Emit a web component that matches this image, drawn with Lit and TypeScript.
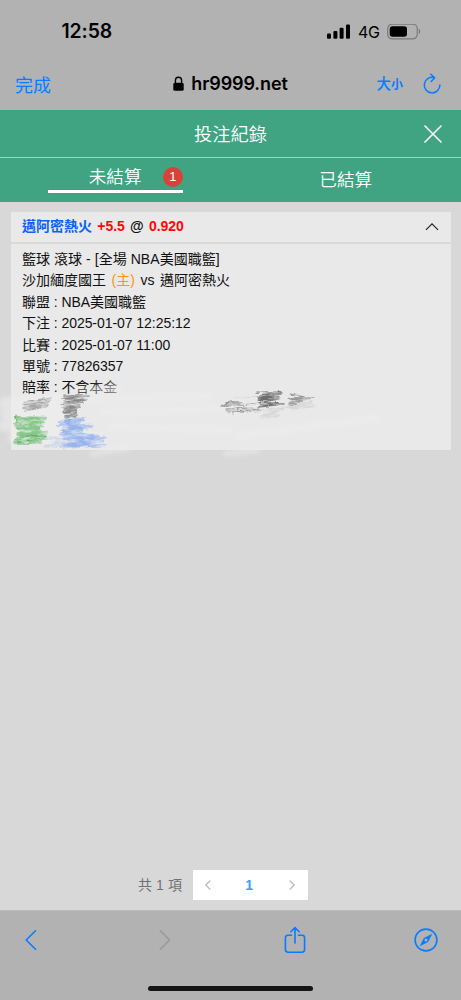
import { LitElement, html, css, svg } from "lit";
import { customElement } from "lit/decorators.js";

@customElement("status-bar")
class StatusBar extends LitElement {
  static styles = css`
    :host { display: flex; height: 62px; justify-content: space-between; box-sizing: border-box; padding: 20px 40px 0 61.5px; }
    .time { font: 600 19.4px/23px Inter, sans-serif; letter-spacing: -0.1px; color: #000; }
    .right { display: flex; height: 23px; align-items: center; }
    .net { font: 400 16px/23px Inter, sans-serif; margin: 1px 7px 0 8px; letter-spacing: -0.3px; width: 22px; }
    svg { display: block; }
  `;
  render() {
    return html`
      <div class="time">12:58</div>
      <div class="right">
        <svg width="24" height="16" viewBox="0 0 24 16">
          <rect x="1" y="9.6" width="4" height="5.2" rx="1.1" /><rect x="7.4" y="7" width="4" height="7.8" rx="1.1" />
          <rect x="13.6" y="3.8" width="4" height="11" rx="1.1" /><rect x="20" y="0.5" width="4" height="14.3" rx="1.1" />
        </svg>
        <span class="net">4G</span>
        <svg width="34" height="16" viewBox="0 0 34 16">
          <rect x="0.7" y="0.2" width="29.6" height="14.6" rx="4.6" fill="none" stroke="#7b7b7b" stroke-width="1.2" />
          <rect x="2.7" y="2.2" width="17.3" height="10.6" rx="2.8" />
          <path d="M31.8 4.8c1.9.7 1.9 4.7 0 5.4z" fill="#7b7b7b" />
        </svg>
      </div>`;
  }
}

@customElement("address-bar")
class AddressBar extends LitElement {
  static styles = css`
    :host { display: grid; grid-template-columns: 1fr auto 1fr; align-items: center; height: 48px; box-sizing: border-box; padding: 0 19px 4px 15px; }
    .blue { color: #087cff; font: 400 18px/26px "Noto Sans CJK TC", sans-serif; margin-top: -1px; }
    .site { display: flex; align-items: center; gap: 7px; font: 600 18px/24px Inter, sans-serif; letter-spacing: -0.1px; color: #000; padding-left: 4px; }
    .tools { display: flex; justify-content: flex-end; align-items: center; gap: 19px; }
    .size { display: flex; align-items: baseline; font-weight: 500; font-size: 14.5px; }
    .size small { font-size: 12px; font-weight: 700; }
    svg { display: block; }
  `;
  render() {
    return html`
      <span class="blue">完成</span>
      <span class="site">
        <svg width="11" height="16" viewBox="0 0 11 16"><rect x="0.3" y="6.8" width="10.4" height="8" rx="1.6" /><path d="M2.4 7.5V4.4a3.1 3.1 0 0 1 6.2 0v3.1" fill="none" stroke="#000" stroke-width="1.4" /></svg>
        <span>hr9999.net</span>
      </span>
      <span class="tools">
        <span class="blue size">大<small>小</small></span>
        <svg width="20" height="22" viewBox="0 0 20 22" fill="none" stroke="#087cff" stroke-width="1.5" stroke-linecap="round" stroke-linejoin="round"><path d="M12.3 4.6A7.8 7.8 0 1 0 17.9 12.1M8.8 1.2l3.9 3.5-3.5 3.8" /></svg>
      </span>`;
  }
}

@customElement("record-header")
class RecordHeader extends LitElement {
  static styles = css`
    :host { display: block; background: #40a381; color: #fff; font-family: "Noto Sans CJK TC", sans-serif; }
    .title { display: grid; grid-template-columns: 50px 1fr 50px; height: 48px; box-sizing: border-box; border-bottom: 1px solid #a8cfc0; text-align: center; font-size: 18.3px; line-height: 47px; font-weight: 350; }
    .title span { grid-column: 2; }
    .title svg { display: block; margin: 14.5px 0 0 13px; }
    .tabs { display: grid; grid-template-columns: 1fr 1fr; height: 44px; font-size: 17.6px; font-weight: 350; }
    .tab { display: flex; justify-content: center; line-height: 42px; }
    .active { width: 135px; height: 35px; box-sizing: border-box; border-bottom: 3px solid #fff; padding-left: 41px; display: flex; line-height: 35px; }
    .badge { width: 20px; height: 20px; border-radius: 50%; background: #db413b; font: 400 13px/20px "Liberation Sans", sans-serif; text-align: center; margin: 9px 0 0 auto; }
    .word { white-space: nowrap; }
  `;
  render() {
    return html`
      <div class="title"><span>投注紀錄</span>
        <svg width="18" height="18" viewBox="0 0 18 18" stroke="#fff" stroke-width="1.6" stroke-linecap="round"><path d="M1 1L17 17M17 1L1 17" /></svg>
      </div>
      <div class="tabs">
        <div class="tab"><div class="active"><span class="word">未結算</span><span class="badge">1</span></div></div>
        <div class="tab"><span class="word">已結算</span></div>
      </div>`;
  }
}

interface Scribble { color: string; width: number; opacity: number; d: string; }

const hazes: Scribble[] = [
  { color: "#efefef", width: 12, opacity: 0.5, d: "M4 403L60 399L6 414L70 409L4 426L60 422L14 438L100 438" },
  { color: "#ececec", width: 5, opacity: 0.6, d: "M92 454L128 448M226 454L258 450" },
  { color: "#eeeeee", width: 8, opacity: 0.4, d: "M76 390L118 388M90 399L210 396M105 412L235 409M110 426L230 430M240 436L375 418" },
];

const scribbles: Scribble[] = [
  { color: "#777", width: 1.5, opacity: 0.55, d: "M24 402L51 398M24 405L50 401L23 408L48 405L24 411L40 408" },
  { color: "#999", width: 4, opacity: 0.3, d: "M26 403L49 400L25 408L44 406" },
  { color: "#3c3c3c", width: 1.7, opacity: 0.5, d: "M64 396L89 396L62 399L86 399L63 402L83 402L61 405L79 405L62 408L80 407L64 410L77 410L64 413L76 413L66 417L77 415L69 420L75 418" },
  { color: "#777", width: 5, opacity: 0.4, d: "M66 398L80 399L65 405L77 406L67 412L75 412" },
  { color: "#65b867", width: 2.4, opacity: 0.5, d: "M16 417L46 418L17 421L44 422L15 425L43 426L18 429L39 429L18 433L47 432L17 437L46 436L15 441L44 439L16 444L35 442" },
  { color: "#66bd6a", width: 7, opacity: 0.5, d: "M20 420L38 421L20 427L37 429L20 434L43 435L20 441L39 440" },
  { color: "#3b9b46", width: 1.5, opacity: 0.5, d: "M16 415L17 423M16 439L46 436M23 435L47 439M14 443L31 441" },
  { color: "#779ff0", width: 2.5, opacity: 0.5, d: "M59 422L84 419L58 426L90 425L62 430L92 427L60 434L98 436L63 439L105 437L63 443L103 441L61 447L105 445M64 448L85 446M80 446L106 437" },
  { color: "#769df0", width: 7, opacity: 0.45, d: "M67 421L78 421L65 429L80 430L66 437L92 437L67 444L87 444" },
  { color: "#a9bfeb", width: 4, opacity: 0.4, d: "M50 438L67 439L46 447L69 443" },
  { color: "#444", width: 1.1, opacity: 0.6, d: "M221 406L229 402L242 402M222 406L244 405M227 409L247 408M225 404L240 404M233 402V414M238 411L260 410M246 404L254 404" },
  { color: "#999", width: 4, opacity: 0.35, d: "M226 405L242 404M230 411L252 409" },
  { color: "#888", width: 1, opacity: 0.35, d: "M235 398L259 397M227 411L260 411M228 413L255 409M248 405L264 403" },
  { color: "#333", width: 1.4, opacity: 0.6, d: "M257 392L282 392L260 395L281 394L258 398L279 397L258 400L278 399L259 403L284 404L260 404L278 403L259 407L276 405" },
  { color: "#555", width: 4, opacity: 0.4, d: "M260 398L278 398M260 404L277 404" },
  { color: "#555", width: 1.3, opacity: 0.55, d: "M290 394L304 397L289 398L314 398L290 400L307 399L289 403L302 401L290 405L300 402" },
  { color: "#bbb", width: 3, opacity: 0.35, d: "M288 407L312 402L292 408L313 406M258 411L284 408L262 417L278 415" },
];

const stroke = (s: Scribble) => svg`<path d=${s.d} stroke=${s.color} stroke-width=${s.width} opacity=${s.opacity} />`;

@customElement("bet-card")
class BetCard extends LitElement {
  static styles = css`
    :host { display: block; position: relative; margin: 10px 10.5px 0 10.5px; background: #e9e9e9; height: 237.5px; font: 14px/21.4px "Liberation Sans", "Noto Sans CJK TC", sans-serif; color: #111; }
    .head { display: flex; height: 32px; box-sizing: border-box; border-bottom: 2px solid #d9d9d9; padding: 0 12px 0 11.5px; align-items: center; justify-content: space-between; font-weight: 700; }
    .name { word-spacing: 1.3px; }
    .team { color: #0b63f3; }
    .odd { color: #fc0808; }
    .body { padding: 5px 11.5px; white-space: pre; font-weight: 400; }
    .row { height: 21.4px; letter-spacing: -0.05px; }
    .first { letter-spacing: 0.05px; }
    .match { letter-spacing: 0; word-spacing: 1.7px; }
    .home { color: #ff9317; }
    .marks { position: absolute; left: -10.5px; top: 173px; pointer-events: none; }
    .fade { position: absolute; left: 78px; top: 168px; width: 30px; height: 18px; background: linear-gradient(to right, #e9e9e900, #e9e9e970); }
  `;
  render() {
    const rows = ["聯盟 : NBA美國職籃", "下注 : 2025-01-07 12:25:12", "比賽 : 2025-01-07 11:00", "單號 : 77826357", "賠率 : 不含本金"];
    return html`
      <div class="head">
        <span class="name"><span class="team">邁阿密熱火</span> <span class="odd">+5.5</span> @ <span class="odd">0.920</span></span>
        <svg width="14" height="10" viewBox="0 0 14 10" fill="none" stroke="#222" stroke-width="1.2"><path d="M1 7.8L7 1.8L13 7.8" /></svg>
      </div>
      <div class="body"><div class="row first">籃球 滾球 - [全場 NBA美國職籃]</div><div class="row match">沙加緬度國王 <span class="home">(主)</span> vs 邁阿密熱火</div>${rows.map((r) => html`<div class="row">${r}</div>`)}</div>
      <div class="fade"></div>
      <svg class="marks" width="461" height="75" viewBox="0 385 461 75">
        <defs>
          <filter id="haze" filterUnits="userSpaceOnUse" x="0" y="385" width="461" height="75">
            <feGaussianBlur stdDeviation="2" />
          </filter>
          <filter id="rough" filterUnits="userSpaceOnUse" x="0" y="385" width="461" height="75" color-interpolation-filters="sRGB">
            <feTurbulence type="fractalNoise" baseFrequency="0.1 0.3" numOctaves="3" seed="4" result="n" />
            <feDisplacementMap in="SourceGraphic" in2="n" scale="4" xChannelSelector="R" yChannelSelector="G" result="s" />
            <feColorMatrix in="n" type="matrix" values="0 0 0 0 0  0 0 0 0 0  0 0 0 0 0  2 0 0 0 -0.15" result="m" />
            <feComposite in="s" in2="m" operator="in" />
            <feGaussianBlur stdDeviation="0.5 0.35" />
          </filter>
        </defs>
        <g fill="none" stroke-linecap="round" stroke-linejoin="round" filter="url(#haze)">${hazes.map(stroke)}</g>
        <g fill="none" stroke-linecap="round" stroke-linejoin="round" filter="url(#rough)">${scribbles.map(stroke)}</g>
      </svg>`;
  }
}

@customElement("page-nav")
class PageNav extends LitElement {
  static styles = css`
    :host { display: flex; align-items: center; height: 30px; margin: auto 153.5px 10px 138px; justify-content: space-between; color: #717276; font: 14px/30px "Liberation Sans", "Noto Sans CJK TC", sans-serif; }
    .total { white-space: nowrap; letter-spacing: 0.1px; }
    .box { display: grid; grid-template-columns: 30px 1fr 32px; width: 114.5px; height: 30px; background: #fff; align-items: center; justify-items: center; }
    b { color: #409eff; font-size: 14px; }
    svg { display: block; fill: none; stroke: #b9bdc4; stroke-width: 1.3; }
  `;
  render() {
    return html`<span class="total">共 1 項</span>
      <div class="box">
        <svg width="8" height="12" viewBox="0 0 8 12"><path d="M6.3 1.5L1.8 6L6.3 10.5" /></svg>
        <b>1</b>
        <svg width="8" height="12" viewBox="0 0 8 12"><path d="M1.7 1.5L6.2 6L1.7 10.5" /></svg>
      </div>`;
  }
}

@customElement("browser-toolbar")
class BrowserToolbar extends LitElement {
  static styles = css`
    :host { display: flex; flex-direction: column; justify-content: space-between; height: 90px; box-sizing: border-box; background: #b2b2b2; border-top: 1px solid #bcbcbc; padding: 15px 23px 9px 24px; }
    .icons { display: grid; grid-template-columns: 133px 117px 1fr auto; justify-items: start; align-items: center; height: 28px; }
    .icons :first-child, .off { margin-left: 0; }
    .icons .off { margin-left: 0; }
    svg { display: block; fill: none; stroke: #087cff; stroke-width: 1.6; stroke-linecap: round; stroke-linejoin: round; }
    .off { stroke: #999; }
    .share { margin-left: 9.5px; }
    .fill { fill: #087cff; stroke: none; }
    .hole { fill: #b2b2b2; stroke: none; }
    .home { width: 165px; height: 5px; border-radius: 3px; background: #151515; margin-left: 124px; }
  `;
  render() {
    return html`
      <div class="icons">
        <svg width="14" height="22" viewBox="0 0 14 22"><path d="M11.5 1.8L2.2 11L11.5 20.2" /></svg>
        <svg class="off" width="14" height="22" viewBox="0 0 14 22"><path d="M3.3 1.8L12.6 11L3.3 20.2" /></svg>
        <svg class="share" width="22" height="28" viewBox="0 0 22 28"><path d="M7.5 9.2H4A2.6 2.6 0 0 0 1.4 11.8V23.6A2.6 2.6 0 0 0 4 26.2H18A2.6 2.6 0 0 0 20.6 23.6V11.8A2.6 2.6 0 0 0 18 9.2H14.5M11 17V1.8M6.9 5.8L11 1.6L15.1 5.8" /></svg>
        <svg width="24" height="24" viewBox="0 0 24 24"><circle cx="12" cy="12" r="10.9" /><path class="fill" d="M18.3 5.7L14.1 14.1L5.7 18.3L9.9 9.9Z" /><circle class="hole" cx="12" cy="12" r="1.5" /></svg>
      </div>
      <div class="home"></div>`;
  }
}

@customElement("app-root")
class AppRoot extends LitElement {
  static styles = css`
    :host { display: flex; flex-direction: column; width: 461px; height: 1000px; background: #d8d8d8; overflow: hidden; }
    .chrome { background: #b2b2b2; height: 110px; }
  `;
  render() {
    return html`
      <div class="chrome"><status-bar></status-bar><address-bar></address-bar></div>
      <record-header></record-header>
      <bet-card></bet-card>
      <page-nav></page-nav>
      <browser-toolbar></browser-toolbar>`;
  }
}
